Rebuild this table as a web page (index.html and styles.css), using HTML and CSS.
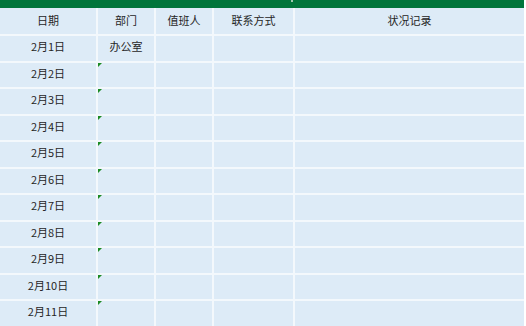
FILE: index.html
```html
<!DOCTYPE html>
<html>
<head>
<meta charset="utf-8">
<link rel="stylesheet" href="styles.css">
</head>
<body>
<div class="topbar"><span class="tick"></span></div>
<div class="sheet">
  <div class="cell head">日期</div><div class="cell head">部门</div><div class="cell head">值班人</div><div class="cell head">联系方式</div><div class="cell head">状况记录</div>
  <div class="cell">2月1日</div><div class="cell">办公室</div><div class="cell"></div><div class="cell"></div><div class="cell"></div>
  <div class="cell">2月2日</div><div class="cell mark"></div><div class="cell"></div><div class="cell"></div><div class="cell"></div>
  <div class="cell">2月3日</div><div class="cell mark"></div><div class="cell"></div><div class="cell"></div><div class="cell"></div>
  <div class="cell">2月4日</div><div class="cell mark"></div><div class="cell"></div><div class="cell"></div><div class="cell"></div>
  <div class="cell">2月5日</div><div class="cell mark"></div><div class="cell"></div><div class="cell"></div><div class="cell"></div>
  <div class="cell">2月6日</div><div class="cell mark"></div><div class="cell"></div><div class="cell"></div><div class="cell"></div>
  <div class="cell">2月7日</div><div class="cell mark"></div><div class="cell"></div><div class="cell"></div><div class="cell"></div>
  <div class="cell">2月8日</div><div class="cell mark"></div><div class="cell"></div><div class="cell"></div><div class="cell"></div>
  <div class="cell">2月9日</div><div class="cell mark"></div><div class="cell"></div><div class="cell"></div><div class="cell"></div>
  <div class="cell">2月10日</div><div class="cell mark"></div><div class="cell"></div><div class="cell"></div><div class="cell"></div>
  <div class="cell">2月11日</div><div class="cell mark"></div><div class="cell"></div><div class="cell"></div><div class="cell"></div>
</div>
</body>
</html>
```
FILE: styles.css
```css
html, body {
  margin: 0;
  padding: 0;
  background: #ffffff;
}
body {
  width: 526px;
  height: 326px;
  overflow: hidden;
  font-family: "Noto Sans CJK SC", "Noto Sans", sans-serif;
  font-size: 11px;
  color: #262626;
}
.topbar {
  position: relative;
  width: 524px;
  height: 8px;
  background: #00753b;
}
.tick {
  position: absolute;
  left: 291px;
  top: 0;
  width: 2px;
  height: 2px;
  background: #9fc9b0;
}
.sheet {
  display: grid;
  width: 524px;
  grid-template-columns: 96px 56px 56px 79px 229px;
  grid-template-rows: 26px repeat(11, 24.5px);
  column-gap: 2px;
  row-gap: 2px;
  background: #f3f8fc;
}
.cell {
  position: relative;
  background: #ddebf7;
  display: flex;
  align-items: center;
  justify-content: center;
  line-height: 1;
  padding-bottom: 3px;
  box-sizing: border-box;
}
.head {
  padding-bottom: 1px;
}
.mark::before {
  content: "";
  position: absolute;
  left: 0;
  top: 0;
  width: 0;
  height: 0;
  border-top: 4px solid #1b8a23;
  border-right: 4px solid transparent;
}
```
